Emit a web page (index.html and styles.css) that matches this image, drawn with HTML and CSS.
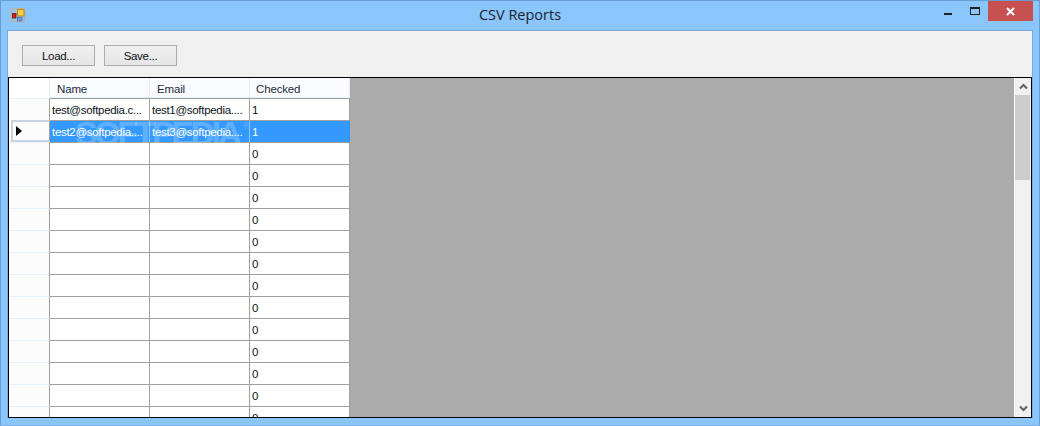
FILE: index.html
```html
<!DOCTYPE html>
<html lang="en">
<head>
<meta charset="utf-8">
<title>CSV Reports</title>
<link rel="stylesheet" href="styles.css">
</head>
<body>
<div class="window">
  <header class="titlebar">
    <svg class="appicon" width="14" height="14" viewBox="0 0 14 14">
      <rect x="0.5" y="0.5" width="13" height="13" fill="#a9bdd0" fill-opacity="0.6" stroke="#b9b3a0" stroke-width="1"/>
      <rect x="1.5" y="5.5" width="3.5" height="4.5" fill="#c8201a" stroke="#7c1410" stroke-width="0.8"/>
      <rect x="6.5" y="1.5" width="6.5" height="6.5" fill="#f7cf45" stroke="#b58a20" stroke-width="1"/>
      <rect x="6.5" y="9.5" width="4.5" height="3.5" fill="#6d9be2" stroke="#4a72c0" stroke-width="0.8"/>
    </svg>
    <h1 class="title">CSV Reports</h1>
    <div class="controls">
      <span class="ctl min"></span>
      <span class="ctl max"></span>
      <span class="close">
        <svg width="9" height="9" viewBox="0 0 9 9"><path d="M1 1L8 8M8 1L1 8" stroke="#fff" stroke-width="2"/></svg>
      </span>
    </div>
  </header>
  <main class="client">
    <div class="toolbar">
      <button class="btn" type="button">Load...</button>
      <button class="btn" type="button">Save...</button>
    </div>
    <div class="grid">
      <div class="table">
        <div class="hrow">
          <div class="corner"></div>
          <div class="hcell">Name</div>
          <div class="hcell">Email</div>
          <div class="hcell last">Checked</div>
        </div>
        <div class="row"><div class="rh"></div><div class="cell">test@softpedia.c...</div><div class="cell">test1@softpedia....</div><div class="cell">1</div></div>
        <div class="row sel"><div class="rh cur"><span class="arrow"></span></div><div class="cell">test2@softpedia....</div><div class="cell">test3@softpedia....</div><div class="cell">1</div></div>
        <div class="row"><div class="rh"></div><div class="cell"></div><div class="cell"></div><div class="cell">0</div></div>
        <div class="row"><div class="rh"></div><div class="cell"></div><div class="cell"></div><div class="cell">0</div></div>
        <div class="row"><div class="rh"></div><div class="cell"></div><div class="cell"></div><div class="cell">0</div></div>
        <div class="row"><div class="rh"></div><div class="cell"></div><div class="cell"></div><div class="cell">0</div></div>
        <div class="row"><div class="rh"></div><div class="cell"></div><div class="cell"></div><div class="cell">0</div></div>
        <div class="row"><div class="rh"></div><div class="cell"></div><div class="cell"></div><div class="cell">0</div></div>
        <div class="row"><div class="rh"></div><div class="cell"></div><div class="cell"></div><div class="cell">0</div></div>
        <div class="row"><div class="rh"></div><div class="cell"></div><div class="cell"></div><div class="cell">0</div></div>
        <div class="row"><div class="rh"></div><div class="cell"></div><div class="cell"></div><div class="cell">0</div></div>
        <div class="row"><div class="rh"></div><div class="cell"></div><div class="cell"></div><div class="cell">0</div></div>
        <div class="row"><div class="rh"></div><div class="cell"></div><div class="cell"></div><div class="cell">0</div></div>
        <div class="row"><div class="rh"></div><div class="cell"></div><div class="cell"></div><div class="cell">0</div></div>
        <div class="row"><div class="rh"></div><div class="cell"></div><div class="cell"></div><div class="cell">0</div></div>
      </div>
      <div class="empty"></div>
      <div class="scrollbar">
        <span class="sbtn">
          <svg width="9" height="7" viewBox="0 0 9 7"><path d="M1 5.5L4.5 2L8 5.5" fill="none" stroke="#606060" stroke-width="2"/></svg>
        </span>
        <div class="track"><div class="thumb"></div></div>
        <span class="sbtn">
          <svg width="9" height="7" viewBox="0 0 9 7"><path d="M1 1.5L4.5 5L8 1.5" fill="none" stroke="#606060" stroke-width="2"/></svg>
        </span>
      </div>
      <div class="watermark">SOFTPEDIA<span class="reg">®</span></div>
    </div>
  </main>
</div>
</body>
</html>
```
FILE: styles.css
```css
* { box-sizing: border-box; }
html, body { margin: 0; padding: 0; }
body { width: 1040px; height: 426px; overflow: hidden; background: #8ac5fb; font-family: "Open Sans", "Liberation Sans", sans-serif; }
.window { width: 1040px; height: 426px; display: flex; flex-direction: column; border: 1px solid #6b9ed0; border-bottom-color: #7db2e6; }
.titlebar { height: 29px; flex: none; display: flex; align-items: flex-start; position: relative; }
.appicon { margin: 7px 0 0 10px; flex: none; }
.title { position: absolute; left: 0; right: 0; top: 4px; margin: 0; text-align: center; font-family: "Open Sans", sans-serif; font-size: 14.5px; line-height: 20px; font-weight: 400; color: #1c2430; }
.controls { margin-left: auto; display: flex; align-items: flex-start; margin-right: 6px; }
.ctl { display: block; position: relative; }
.min { width: 8px; height: 2px; margin-top: 12px; background: #222; margin-right: 18px; }
.max { width: 10px; height: 8px; margin-top: 6px; border: 1px solid #222; border-top-width: 2px; margin-right: 8px; }
.close { width: 45px; height: 20px; background: #c75050; display: flex; align-items: center; justify-content: center; }
.close svg { display: block; }
.client { flex: 1; min-height: 0; margin: 0 6px 7px; border: 1px solid #7ba9d8; border-bottom: 0; background: #f0f0f0; display: flex; flex-direction: column; }
.toolbar { height: 46px; flex: none; display: flex; gap: 9px; padding: 14px 0 0 14px; }
.btn { width: 73px; height: 21px; padding: 0; border: 1px solid #adadad; background: linear-gradient(#f0f0f0, #e5e5e5); font-family: "Liberation Sans", sans-serif; font-size: 11.5px; letter-spacing: -0.3px; color: #111; }
.grid { flex: 1; min-height: 0; display: flex; position: relative; overflow: hidden; border: 1px solid #000; background: #ababab; }
.table { width: 341px; flex: none; overflow: hidden; font-family: "Liberation Sans", sans-serif; font-size: 11.5px; letter-spacing: -0.3px; color: #0c1420; background: #fff; }
.hrow { height: 20px; display: flex; background: #fff; }
.corner { width: 41px; flex: none; border-right: 1px solid #e6ecf5; background: #fff; }
.hcell { width: 100px; flex: none; height: 20px; padding-left: 7px; line-height: 23px; overflow: hidden; background: #fbfcff; border-right: 1px solid #e4edf8; border-bottom: 1px solid #e4edf8; letter-spacing: -0.15px; color: #1c2a40; }
.hcell.last { padding-left: 6px; }
.row { height: 22px; display: flex; }
.rh { width: 41px; flex: none; background: #fcfcfd; border-right: 1px solid #a0a0a0; border-top: 1px solid #e8f0fc; display: flex; align-items: center; }
.rh.cur { border: 2px solid #c8d4e4; border-right-width: 1px; border-right-color: #a0a0a0; margin-left: 2px; width: 39px; background: #fcfcfd; }
.arrow { width: 0; height: 0; margin-left: 3px; border-left: 6px solid #000; border-top: 5px solid transparent; border-bottom: 5px solid transparent; }
.cell { width: 100px; flex: none; padding-left: 2px; line-height: 23px; white-space: nowrap; overflow: hidden; border-top: 1px solid #a0a0a0; border-right: 1px solid #a0a0a0; }
.sel .cell { background: #3399ff; color: #fff; border-right-color: #92c5f8; }
.sel .cell:last-child { border-right-color: #3399ff; }
.empty { flex: 1; min-width: 0; }
.scrollbar { width: 17px; flex: none; border-left: 1px solid #fff; background: #f0f0f0; display: flex; flex-direction: column; }
.sbtn { height: 17px; flex: none; display: flex; align-items: center; justify-content: center; }
.track { flex: 1; min-height: 0; }
.thumb { height: 85px; margin-right: 1px; background: #cdcdcd; }
.watermark { position: absolute; left: 66px; top: 38px; font-family: "Liberation Sans", sans-serif; font-weight: 700; font-size: 34px; letter-spacing: -3.4px; line-height: 34px; color: rgba(255,255,255,0.24); white-space: nowrap; pointer-events: none; }
.reg { font-size: 9px; line-height: 0; font-weight: 400; letter-spacing: 0; vertical-align: 16px; margin-left: 4px; }
```
